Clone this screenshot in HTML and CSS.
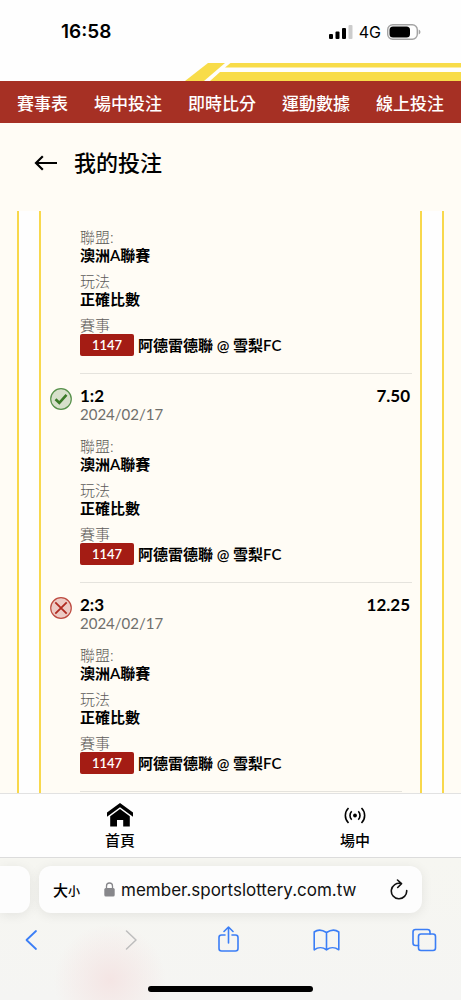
FILE: index.html
```html
<!DOCTYPE html>
<html lang="zh-Hant">
<head>
    <meta charset="UTF-8">
    <meta name="viewport" content="width=device-width, initial-scale=1.0">
    <title>我的投注</title>
    <link rel="stylesheet" href="styles.css">
</head>
<body>
    <header class="header">
        <div class="status-bar">
            <span class="time">16:58</span>
            <div class="status-icons">
                <svg width="24" height="16" viewBox="0 0 24 16">
                    <rect x="0" y="10" width="4" height="5" rx="1"/>
                    <rect x="6.500" y="7.500" width="4" height="7.500" rx="1"/>
                    <rect x="13" y="4" width="4" height="11" rx="1"/>
                    <rect x="19.500" y="1" width="4" height="14" rx="1" fill="#ccc"/>
                </svg>
                <span class="network">4G</span>
                <svg width="34" height="16" viewBox="0 0 34 16">
                    <rect x="0.700" y="0.700" width="29.600" height="14.600" rx="5" fill="none" stroke="#a3a3a3" stroke-width="1.400"/>
                    <rect x="2.500" y="2.500" width="20.500" height="11" rx="3.500"/>
                    <path d="M31.700 5.500c2.300.8 2.300 4.200 0 5z" fill="#a3a3a3"/>
                </svg>
            </div>
        </div>
        <svg class="stripe" width="276" height="18" viewBox="0 0 276 18">
            <path d="M0 18L23 0h17L19 18z"/>
            <path d="M45.500 0H276v4.500H40z"/>
            <path d="M35 9H276v9H25z"/>
        </svg>
        <nav class="navbar">
            <a href="#">賽事表</a>
            <a href="#">場中投注</a>
            <a href="#">即時比分</a>
            <a href="#">運動數據</a>
            <a href="#">線上投注</a>
        </nav>
    </header>

    <div class="page-title">
        <button class="back" aria-label="返回">
            <svg width="24" height="16" viewBox="0 0 24 16" fill="none" stroke="#000" stroke-width="2.200">
                <path d="M23 8H2M8.800 1.200L2 8l6.800 6.800"/>
            </svg>
        </button>
        <h1>我的投注</h1>
    </div>

    <main class="frame">
        <div class="bets">
            <section class="bet first">
                <div class="bet-body">
                    <dl>
                        <dt>聯盟:</dt>
                        <dd>澳洲A聯賽</dd>
                        <dt>玩法</dt>
                        <dd>正確比數</dd>
                        <dt>賽事</dt>
                        <dd class="match"><span class="badge">1147</span>阿德雷德聯 @ 雪梨FC</dd>
                    </dl>
                </div>
            </section>

            <section class="bet">
                <svg class="result" width="22" height="22" viewBox="0 0 22 22">
                    <circle cx="11" cy="11" r="10.300" fill="#d7e0cb" stroke="#56904a" stroke-width="1.200"/>
                    <path d="M5.500 11.300l3.800 3.500 7.200-8" fill="none" stroke="#3b7a28" stroke-width="2.600"/>
                </svg>
                <div class="bet-body">
                    <div class="score">
                        <h2>1:2</h2>
                        <strong>7.50</strong>
                    </div>
                    <time>2024/02/17</time>
                    <dl>
                        <dt>聯盟:</dt>
                        <dd>澳洲A聯賽</dd>
                        <dt>玩法</dt>
                        <dd>正確比數</dd>
                        <dt>賽事</dt>
                        <dd class="match"><span class="badge">1147</span>阿德雷德聯 @ 雪梨FC</dd>
                    </dl>
                </div>
            </section>

            <section class="bet last">
                <svg class="result" width="22" height="22" viewBox="0 0 22 22">
                    <circle cx="11" cy="11" r="10.300" fill="#edcbc5" stroke="#bd4a40" stroke-width="1.200"/>
                    <path d="M5.300 5.300l11.400 11.400M16.700 5.300L5.300 16.700" fill="none" stroke="#b02a20" stroke-width="1.800"/>
                </svg>
                <div class="bet-body">
                    <div class="score">
                        <h2>2:3</h2>
                        <strong>12.25</strong>
                    </div>
                    <time>2024/02/17</time>
                    <dl>
                        <dt>聯盟:</dt>
                        <dd>澳洲A聯賽</dd>
                        <dt>玩法</dt>
                        <dd>正確比數</dd>
                        <dt>賽事</dt>
                        <dd class="match"><span class="badge">1147</span>阿德雷德聯 @ 雪梨FC</dd>
                    </dl>
                </div>
            </section>
        </div>
    </main>

    <nav class="tabs">
        <a href="#">
            <svg width="26" height="24" viewBox="0 0 26 24">
                <path d="M13 0L0 9.500v4.200l13-9.500 13 9.500V9.500z"/>
                <path d="M13 6L3.200 13.200V23.500H10V17h6.200v6.500h6.600V13.200z"/>
            </svg>
            <span>首頁</span>
        </a>
        <a href="#">
            <svg width="22" height="24" viewBox="0 0 22 24" fill="none" stroke="#000" stroke-width="1.600">
                <circle cx="11" cy="12.500" r="1.900" fill="#000" stroke="none"/>
                <path d="M7.700 8.300a6 6 0 0 0 0 8.400M14.300 8.300a6 6 0 0 1 0 8.400M4.500 5a10.500 10.500 0 0 0 0 15M17.500 5a10.500 10.500 0 0 1 0 15"/>
            </svg>
            <span>場中</span>
        </a>
    </nav>

    <footer class="browser">
        <div class="address-row">
            <div class="previous-tab"></div>
            <div class="address">
                <button class="text-size">大<small>小</small></button>
                <svg width="11" height="15" viewBox="0 0 11 15">
                    <rect x="0.300" y="6" width="10.400" height="8.500" rx="1.500" fill="#87878b"/>
                    <path d="M2.500 6.500V4a3 3 0 0 1 6 0v2.500" fill="none" stroke="#87878b" stroke-width="1.300"/>
                </svg>
                <input type="text" value="member.sportslottery.com.tw" aria-label="網址">
                <button aria-label="重新載入">
                    <svg width="18" height="22" viewBox="0 0 18 22" fill="none" stroke="#111" stroke-width="1.600" stroke-linecap="round" stroke-linejoin="round">
                        <path d="M11 4.600A7.700 7.700 0 1 0 16.700 11.500M7.500 1l4 3.700-3.800 3.800"/>
                    </svg>
                </button>
            </div>
        </div>
        <div class="toolbar">
            <button aria-label="上一頁">
                <svg width="32" height="28" viewBox="0 0 32 28"><path d="M21 5l-9.500 9 9.500 9" stroke-width="1.800"/></svg>
            </button>
            <button class="disabled" aria-label="下一頁" disabled>
                <svg width="32" height="28" viewBox="0 0 32 28"><path d="M13.500 5l9.500 9-9.500 9" stroke-width="1.500"/></svg>
            </button>
            <button aria-label="分享">
                <svg width="32" height="28" viewBox="0 0 32 28"><path d="M13 9H9.500Q7 9 7 11.500v11Q7 25 9.500 25h14q2.500 0 2.500-2.500v-11Q26 9 23.500 9H20M16.500 17V1.500M12 5.500L16.500 1 21 5.500"/></svg>
            </button>
            <button aria-label="書籤">
                <svg width="32" height="28" viewBox="0 0 32 28"><path d="M16.500 6.500v17.300C13 21 8 21 4.200 23.800V6Q9.500 2 16.500 6.500Q23.500 2 28.800 6v17.800C25 21 20 21 16.500 23.800"/></svg>
            </button>
            <button aria-label="分頁">
                <svg width="32" height="28" viewBox="0 0 32 28"><rect x="10.500" y="8" width="17" height="16.500" rx="2.500"/><path d="M10.500 19.500H7.500Q5 19.500 5 17V6Q5 3.500 7.500 3.500h12Q22 3.500 22 6v2"/></svg>
            </button>
        </div>
        <div class="home-indicator"></div>
    </footer>
</body>
</html>
```
FILE: styles.css
```css
* {
    box-sizing: border-box;
}

body {
    margin: 0;
    height: 100vh;
    display: flex;
    flex-direction: column;
    overflow: hidden;
    font-family: Lato, "Noto Sans CJK TC", sans-serif;
    font-size: 15px;
    color: #000;
    background-color: #fffcf5;
}

a {
    color: inherit;
    text-decoration: none;
}

button {
    padding: 0;
    border: none;
    background: none;
    font-family: inherit;
    color: inherit;
    cursor: pointer;
}

svg {
    display: block;
    flex-shrink: 0;
}

/* Status bar and main menu */
.header {
    background-color: #fefefe;
}

.status-bar {
    display: flex;
    justify-content: space-between;
    align-items: center;
    height: 63px;
    padding: 0 40px 0 61px;
    font-family: Inter, sans-serif;
}

.time {
    font-size: 19px;
    font-weight: 600;
}

.status-icons {
    display: flex;
    align-items: center;
    gap: 6px;
}

.network {
    font-size: 16px;
}

.stripe {
    margin-left: auto;
    fill: #f8dc49;
}

.navbar {
    display: flex;
    gap: 26px;
    height: 42px;
    padding: 0 17px;
    align-items: center;
    overflow: hidden;
    white-space: nowrap;
    font-size: 17px;
    font-weight: 500;
    font-family: "Noto Sans CJK TC", sans-serif;
    color: #fff;
    background-color: #a63024;
}

.page-title {
    display: flex;
    align-items: center;
    gap: 16px;
    height: 88px;
    padding: 0 34px 8px;
}

.page-title h1 {
    margin: 0;
    font-size: 22px;
    line-height: 32px;
    font-weight: 500;
}

/* Ticket frame with double yellow rails */
.frame {
    flex: 1;
    min-height: 0;
    overflow: hidden;
    margin: 0 17px;
    padding: 0 20px;
    border: solid #f8d84c;
    border-width: 0 2px;
    background-color: #fefefe;
}

.bets {
    height: 100%;
    padding: 0 8px 0 9px;
    border: solid #f8d84c;
    border-width: 0 2px;
    background-color: #fffcf5;
}

.bet {
    display: grid;
    grid-template-columns: 22px 1fr;
    column-gap: 8px;
}

.bet-body {
    grid-column: 2;
    padding: 13px 0 17px;
    border-bottom: 1px solid #e5e3dd;
    line-height: 18px;
}

.first .bet-body {
    padding-top: 17px;
}

.last .bet-body {
    margin-right: 10px;
}

.last .score {
    margin-right: -10px;
}

.result {
    margin-top: 14px;
}

.score {
    display: flex;
    justify-content: space-between;
    padding-right: 2px;
    font-size: 17px;
}

.score h2 {
    margin: 0;
    font-size: 17px;
}

time {
    display: block;
    margin-bottom: 14px;
    color: #6f6f6c;
}

dl {
    margin: 0;
}

dt {
    color: #5c5a58;
    font-weight: 300;
}

dd {
    margin: 0 0 8px;
    font-weight: 600;
}

.match {
    display: flex;
    align-items: center;
    gap: 4px;
    margin-bottom: 0;
}

.badge {
    width: 54px;
    border-radius: 2px;
    font-size: 13px;
    line-height: 22px;
    text-align: center;
    color: #fff;
    background-color: #a41c14;
}

/* Bottom tabs */
.tabs {
    display: flex;
    justify-content: space-between;
    height: 65px;
    padding: 9px 66px 0 80px;
    border-top: 1px solid #e2e2e2;
    border-bottom: 1px solid #dcdcdc;
    font-weight: 500;
    background-color: #fefefe;
}

.tabs a {
    display: flex;
    flex-direction: column;
    align-items: center;
    gap: 2px;
    width: 80px;
    line-height: 22px;
}

/* Browser controls */
.browser {
    height: 142px;
    padding-top: 8px;
    background: radial-gradient(circle at 110px 122px, #f4e5e4, rgba(244, 229, 228, 0.6) 22px, rgba(244, 229, 228, 0) 56px), linear-gradient(#f6f6f1, #f5f5f3);
}

.address-row {
    display: flex;
    gap: 9px;
    height: 47px;
    padding-right: 39px;
}

.previous-tab {
    width: 30px;
    border-radius: 0 12px 12px 0;
    background-color: #fdfdfd;
    box-shadow: 0 2px 12px rgba(0, 0, 0, 0.08);
}

.address {
    flex: 1;
    display: flex;
    align-items: center;
    min-width: 0;
    padding: 0 14px;
    border-radius: 12px;
    background-color: #fdfdfd;
    box-shadow: 0 2px 12px rgba(0, 0, 0, 0.08);
}

.text-size {
    margin-right: 24px;
    font-size: 15px;
    font-weight: 500;
    white-space: nowrap;
}

.text-size small {
    font-size: 12px;
}

.address input {
    flex: 1;
    min-width: 0;
    margin-left: 6px;
    padding: 0;
    border: none;
    outline: none;
    font-family: Inter, sans-serif;
    font-size: 17px;
    color: #111;
    background: none;
}

.toolbar {
    display: flex;
    justify-content: space-between;
    padding: 13px 21px 0 15px;
}

.toolbar svg {
    fill: none;
    stroke: #3b7ef6;
    stroke-width: 1.6px;
    stroke-linecap: round;
    stroke-linejoin: round;
}

.toolbar .disabled svg {
    stroke: #bdbdbd;
}

.home-indicator {
    width: 165px;
    height: 6px;
    margin: 32px auto 0;
    border-radius: 3px;
    background-color: #000;
}
```
